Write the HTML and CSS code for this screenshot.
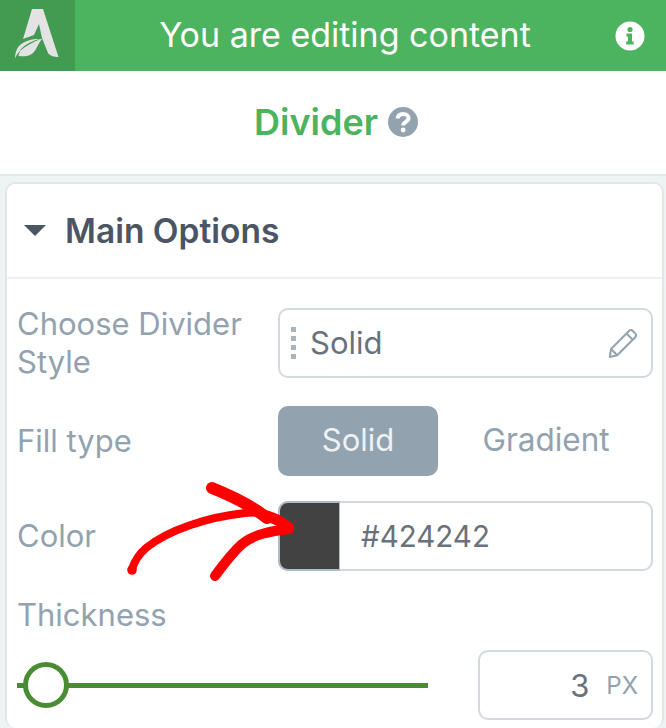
FILE: index.html
```html
<!DOCTYPE html>
<html lang="en">
<head>
    <meta charset="UTF-8">
    <meta name="viewport" content="width=device-width, initial-scale=1.0">
    <title>Divider - Editing content</title>
    <link rel="stylesheet" href="styles.css">
</head>
<body>
    <header class="top-bar">
        <a href="#" class="logo">
            <svg width="75" height="71" viewBox="0 0 75 71">
                <path fill="#e3e3e3" d="M32 9h11l15.500 48c-4 0-8.500-1-10.500-4l-6-15-3-14-5 11-11 4z"/>
                <path fill="#e3e3e3" d="M42 39c-7-.5-17 .5-23 7-3 3.500-4 8-4 12.500 1-2.500 3-6 5.500-8-1 2-1.800 3.500-2 5.500 8 1 14-.5 17.500-7 2-3.500 3.500-7.500 6-10z"/>
                <path fill="#439b52" d="M41 39c-7 2.500-14 6-20.500 11.500l-.5-.5c5.500-5.500 13-10 21-11z"/>
            </svg>
        </a>
        <div class="top-title">You are editing content</div>
        <svg class="info-icon" width="30" height="30" viewBox="0 0 30 30">
            <circle cx="15" cy="15" r="14.500" fill="#fff"/>
            <circle cx="15" cy="8.500" r="2.600" fill="#4cb35f"/>
            <path fill="#4cb35f" d="M11.500 12.500h5.500v8h1.700v3h-7.500v-3h1.700v-5h-1.400z"/>
        </svg>
    </header>

    <section class="title-row">
        <h1>Divider</h1>
        <svg width="30" height="30" viewBox="0 0 30 30">
            <circle cx="15" cy="15" r="15" fill="#93a2af"/>
            <path fill="none" stroke="#fff" stroke-width="4" d="M9.500 11.500c.5-3 2.700-4.500 5.700-4.500 3.200 0 5.300 1.800 5.300 4.300 0 3.700-5.300 3.400-5.300 7.200"/>
            <circle cx="15.200" cy="23" r="2.400" fill="#fff"/>
        </svg>
    </section>

    <main class="panel-wrap">
        <div class="panel">
            <div class="panel-head">
                <span class="caret"></span>
                <h2>Main Options</h2>
            </div>
            <div class="panel-body">
                <div class="option-row style-row">
                    <label>Choose Divider Style</label>
                    <div class="style-select">
                        <span class="dots"><i></i><i></i><i></i><i></i></span>
                        <span class="style-name">Solid</span>
                        <svg class="pencil" width="32" height="32" viewBox="0 0 32 32">
                            <path fill="none" stroke="#93a2af" stroke-width="2" stroke-linejoin="round" d="M4 22 22 4c1.200-1.200 2.500-1.200 3.600-.2l2.800 2.800c1 1.100 1 2.400-.2 3.600L10.200 28.200 2.800 30z"/>
                            <path fill="none" stroke="#93a2af" stroke-width="2" d="m19.500 6.500 6 6"/>
                            <path fill="none" stroke="#93a2af" stroke-width="2" d="m4 22 6 6"/>
                        </svg>
                    </div>
                </div>
                <div class="option-row fill-row">
                    <label>Fill type</label>
                    <div class="fill-toggle">
                        <button class="fill-btn active">Solid</button>
                        <button class="fill-btn">Gradient</button>
                    </div>
                </div>
                <div class="option-row color-row">
                    <label>Color</label>
                    <div class="color-field">
                        <span class="swatch"></span>
                        <span class="color-value">#424242</span>
                    </div>
                </div>
                <div class="thick-label">Thickness</div>
                <div class="thick-row">
                    <div class="slider">
                        <span class="knob"></span>
                    </div>
                    <div class="num-field">
                        <span class="num">3</span>
                        <span class="unit">PX</span>
                    </div>
                </div>
            </div>
        </div>
    </main>

    <svg class="arrow" width="666" height="728" viewBox="0 0 666 728">
        <g fill="none" stroke="#f00" stroke-linecap="round">
            <path stroke-width="8" d="M132 569c3-9 7-15 14-21 22-18 62-31 99-35 18-2 32 3 45 14"/>
            <path stroke-width="12" d="M212 488c20 8 40 18 55 30"/>
            <path stroke-width="8" d="M266 517c8 3 17 7 24 11"/>
            <path stroke-width="10" d="M215 576c8-11 16-22 27-32 12-10 30-13 47-15"/>
        </g>
        <circle cx="287" cy="528" r="5.500" fill="#f00"/>
        <circle cx="132" cy="570" r="4.800" fill="#f00"/>
    </svg>
</body>
</html>
```

FILE: styles.css
```css
:root {
    --green: #4cb35f;
    --green-dark: #439b52;
    --slate: #93a2af;
    --text: #68727d;
    --line: #d3dade;
}

* {
    margin: 0;
    padding: 0;
    box-sizing: border-box;
    font-family: Inter, 'Noto Sans', sans-serif;
}

body {
    width: 666px;
    height: 728px;
    overflow: hidden;
    position: relative;
    background-color: #fff;
}

.top-bar {
    height: 71px;
    display: flex;
    align-items: center;
    background-color: var(--green);
    color: #fff;
}

.logo {
    width: 75px;
    height: 71px;
    background-color: var(--green-dark);
}

.logo svg {
    display: block;
}

.top-title {
    flex: 1;
    text-align: center;
    font-size: 34px;
    padding: 0 0 3px 0;
    white-space: nowrap;
}

.info-icon {
    margin-right: 21px;
}

.title-row {
    height: 103px;
    display: flex;
    align-items: center;
    justify-content: center;
    gap: 10px;
    padding: 0 0 2px 6px;
}

.title-row h1 {
    font-size: 36px;
    font-weight: 600;
    color: var(--green);
}

.panel-wrap {
    height: 554px;
    padding: 6px 2px 0 5px;
    background-color: #eef3f3;
    border-top: 2px solid #e1e9ea;
}

.panel {
    background: #fff;
    border: 2px solid #e1e7e8;
    border-bottom: none;
    border-radius: 10px;
    height: 546px;
}

.panel-head {
    height: 95px;
    display: flex;
    align-items: center;
    padding-left: 17px;
    gap: 19px;
    border-bottom: 2px solid #eef1f2;
}

.caret {
    width: 0;
    height: 0;
    border-left: 11px solid transparent;
    border-right: 11px solid transparent;
    border-top: 11px solid #4b5563;
}

.panel-head h2 {
    font-size: 33.500px;
    font-weight: 600;
    color: #4b5563;
}

.panel-body {
    padding: 0 9px 0 10px;
}

.option-row {
    display: flex;
    align-items: center;
}

.option-row label,
.thick-label {
    font-size: 31px;
    line-height: 38px;
    color: var(--slate);
}

.option-row label {
    width: 261px;
    flex-shrink: 0;
    padding-right: 10px;
}

.style-row {
    padding-top: 26px;
}

.style-select {
    width: 375px;
    height: 70px;
    display: flex;
    align-items: center;
    padding: 0 12px 0 11px;
    border: 2px solid var(--line);
    border-radius: 10px;
}

.dots {
    display: flex;
    flex-direction: column;
    gap: 4px;
    margin-right: 14px;
}

.dots i {
    display: block;
    width: 5px;
    height: 5px;
    background-color: #a8b4be;
}

.style-name {
    flex: 1;
    font-size: 31px;
    color: var(--text);
    padding-bottom: 1px;
}

.fill-row {
    padding-top: 25px;
}

.fill-toggle {
    display: flex;
}

.fill-btn {
    width: 160px;
    height: 70px;
    border: none;
    border-radius: 10px;
    background: none;
    font-size: 31px;
    padding-bottom: 3px;
    color: var(--slate);
}

.fill-btn + .fill-btn {
    width: 216px;
    font-size: 31.500px;
}

.fill-btn.active {
    background-color: var(--slate);
    color: #eef2f4;
}

.color-row {
    padding-top: 25px;
}

.color-field {
    width: 375px;
    height: 70px;
    display: flex;
    align-items: center;
    border: 2px solid var(--line);
    border-radius: 10px;
}

.swatch {
    width: 62px;
    height: 70px;
    margin-left: -2px;
    background-color: #424242;
    border: 2px solid #aebac4;
    border-right-width: 1px;
    border-radius: 10px 0 0 10px;
}

.color-value {
    padding-left: 21px;
    font-size: 29.500px;
    color: var(--text);
}

.thick-label {
    padding-top: 25px;
}

.thick-row {
    display: flex;
    align-items: center;
    justify-content: space-between;
    padding-top: 16px;
}

.slider {
    width: 411px;
    height: 5px;
    position: relative;
    background-color: #4a8c34;
}

.knob {
    position: absolute;
    left: 6px;
    top: -21px;
    width: 46px;
    height: 46px;
    background: #fff;
    border: 5px solid #4a8c34;
    border-radius: 50%;
}

.num-field {
    width: 175px;
    height: 70px;
    display: flex;
    align-items: center;
    justify-content: flex-end;
    gap: 17px;
    padding-right: 13px;
    border: 2px solid var(--line);
    border-radius: 10px;
}

.num {
    font-size: 31px;
    color: var(--text);
}

.unit {
    font-size: 24px;
    color: var(--slate);
}

.arrow {
    position: absolute;
    left: 0;
    top: 0;
    pointer-events: none;
}
```
